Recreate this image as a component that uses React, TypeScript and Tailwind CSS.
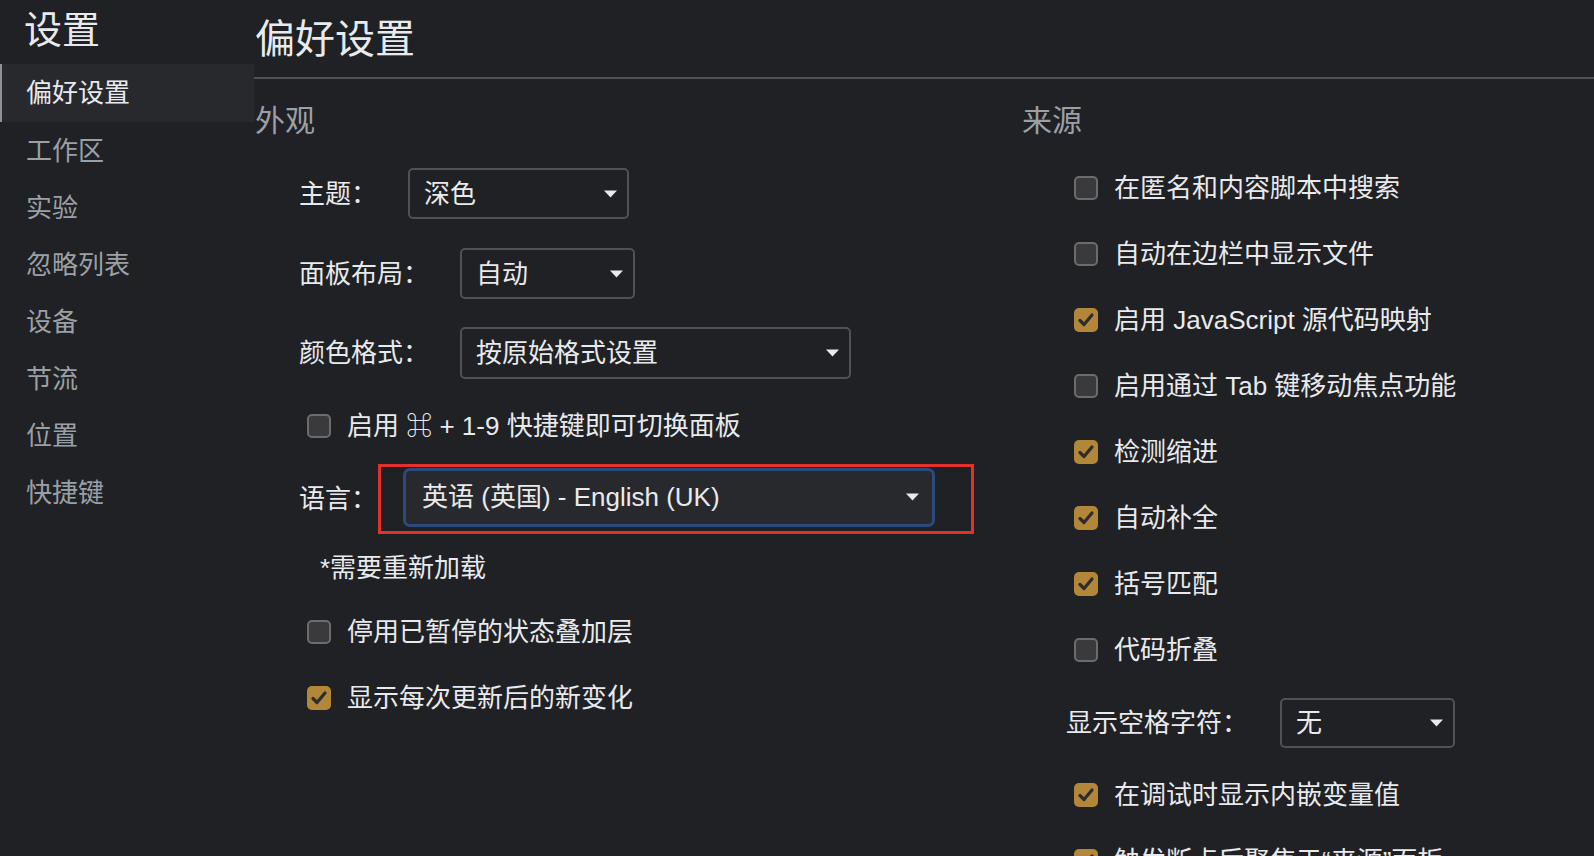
import React from "react";

const FONT = '"Liberation Sans", "Noto Sans CJK SC", "DejaVu Sans", sans-serif';

const sidebarItems = ["偏好设置", "工作区", "实验", "忽略列表", "设备", "节流", "位置", "快捷键"];

function Caret() {
  return (
    <svg width="13" height="8" viewBox="0 0 13 8" className="shrink-0">
      <polygon points="0,0.5 13,0.5 6.5,7.5" fill="#e8eaed" />
    </svg>
  );
}

function Checkbox({ checked }: { checked?: boolean }) {
  if (checked) {
    return (
      <span className="flex h-[24px] w-[24px] shrink-0 items-center justify-center rounded-[5px] bg-[#b3873a]">
        <svg width="18" height="16" viewBox="0 0 18 16">
          <polyline
            points="3,8.5 7,12.5 15,3"
            fill="none"
            stroke="#2d2d2f"
            strokeWidth="3.2"
            strokeLinecap="round"
            strokeLinejoin="round"
          />
        </svg>
      </span>
    );
  }
  return (
    <span className="block h-[24px] w-[24px] shrink-0 rounded-[5px] border-2 border-[#6b6c6e] bg-[#3a3a3c]" />
  );
}

function CheckRow({ label, checked, className = "" }: { label: string; checked?: boolean; className?: string }) {
  return (
    <div className={`flex h-[32px] items-center gap-[16px] pl-[53px] ${className}`}>
      <Checkbox checked={checked} />
      <span className="whitespace-nowrap text-[26px] leading-none text-[#e8eaed]">{label}</span>
    </div>
  );
}

function Select({ value, width }: { value: string; width: string }) {
  return (
    <div
      className={`flex h-full ${width} items-center justify-between rounded-[5px] border-2 border-[#4f5154] pl-[14px] pr-[10px]`}
    >
      <span className="whitespace-nowrap text-[26px] leading-none text-[#e8eaed]">{value}</span>
      <Caret />
    </div>
  );
}

function SelectRow({
  label,
  value,
  labelWidth,
  selectWidth,
  height,
  className = "",
}: {
  label: string;
  value: string;
  labelWidth: string;
  selectWidth: string;
  height: string;
  className?: string;
}) {
  return (
    <div className={`flex ${height} items-center pl-[45px] ${className}`}>
      <span className={`${labelWidth} shrink-0 whitespace-nowrap text-[26px] leading-none text-[#e8eaed]`}>
        {label}
      </span>
      <Select value={value} width={selectWidth} />
    </div>
  );
}

export default function App() {
  return (
    <div
      className="flex h-[856px] w-full overflow-hidden bg-[#202124] text-[#e8eaed]"
      style={{ fontFamily: FONT }}
    >
      {/* Sidebar */}
      <aside className="w-[254px] shrink-0">
        <div className="flex h-[64px] items-center pb-[4px] pl-[24px]">
          <h1 className="text-[38px] leading-none text-[#e8eaed]">设置</h1>
        </div>
        <nav>
          {sidebarItems.map((item, i) =>
            i === 0 ? (
              <div
                key={item}
                className="flex h-[58px] items-center border-l-2 border-[#8f9093] bg-[#28292c] pl-[24px] text-[26px] leading-none text-[#e8eaed]"
              >
                {item}
              </div>
            ) : (
              <div
                key={item}
                className="flex h-[57px] items-center pl-[26px] text-[26px] leading-none text-[#9aa0a6]"
              >
                {item}
              </div>
            ),
          )}
        </nav>
      </aside>

      {/* Main */}
      <main className="flex min-w-0 flex-1 flex-col">
        <header className="flex h-[79px] shrink-0 items-center border-b-2 border-[#505154] pl-[1px] pt-[1px]">
          <h2 className="text-[40px] leading-none text-[#e8eaed]">偏好设置</h2>
        </header>

        <div className="flex flex-1">
          {/* Appearance column */}
          <section className="w-[767px] shrink-0">
            <div className="mt-[22px] flex h-[40px] items-center pl-[1px]">
              <h3 className="text-[30px] leading-none text-[#9aa0a6]">外观</h3>
            </div>
            <SelectRow
              className="mt-[27px]"
              height="h-[51px]"
              label="主题："
              value="深色"
              labelWidth="w-[109px]"
              selectWidth="w-[221px]"
            />
            <SelectRow
              className="mt-[29px]"
              height="h-[51px]"
              label="面板布局："
              value="自动"
              labelWidth="w-[161px]"
              selectWidth="w-[175px]"
            />
            <SelectRow
              className="mt-[28px]"
              height="h-[52px]"
              label="颜色格式："
              value="按原始格式设置"
              labelWidth="w-[161px]"
              selectWidth="w-[391px]"
            />
            <CheckRow className="mt-[31px]" label="启用 ⌘ + 1-9 快捷键即可切换面板" />

            <div className="mt-[22px] flex h-[70px] items-center pl-[45px]">
              <span className="w-[79px] shrink-0 text-[26px] leading-none text-[#e8eaed]">语言：</span>
              <div className="flex h-[70px] w-[596px] items-center border-[3px] border-[#e3302b] pb-[4px] pl-[22px]">
                <div className="flex h-[59px] w-[532px] items-center justify-between rounded-[7px] border-[3px] border-[#2b4a7e] bg-[#28292d] pl-[16px] pr-[13px]">
                  <span className="whitespace-nowrap text-[26px] leading-none text-[#e8eaed]">
                    英语 (英国) - English (UK)
                  </span>
                  <Caret />
                </div>
              </div>
            </div>

            <div className="mt-[18px] flex h-[32px] items-center pl-[66px]">
              <span className="text-[26px] leading-none text-[#e8eaed]">*需要重新加载</span>
            </div>
            <CheckRow className="mt-[32px]" label="停用已暂停的状态叠加层" />
            <CheckRow className="mt-[34px]" label="显示每次更新后的新变化" checked />
          </section>

          {/* Sources column */}
          <section className="min-w-0 flex-1">
            <div className="mt-[22px] flex h-[40px] items-center pl-[1px]">
              <h3 className="text-[30px] leading-none text-[#9aa0a6]">来源</h3>
            </div>
            <CheckRow className="mt-[31px]" label="在匿名和内容脚本中搜索" />
            <CheckRow className="mt-[34px]" label="自动在边栏中显示文件" />
            <CheckRow className="mt-[34px]" label="启用 JavaScript 源代码映射" checked />
            <CheckRow className="mt-[34px]" label="启用通过 Tab 键移动焦点功能" />
            <CheckRow className="mt-[34px]" label="检测缩进" checked />
            <CheckRow className="mt-[34px]" label="自动补全" checked />
            <CheckRow className="mt-[34px]" label="括号匹配" checked />
            <CheckRow className="mt-[34px]" label="代码折叠" />
            <SelectRow
              className="mt-[32px]"
              height="h-[50px]"
              label="显示空格字符："
              value="无"
              labelWidth="w-[214px]"
              selectWidth="w-[175px]"
            />
            <CheckRow className="mt-[31px]" label="在调试时显示内嵌变量值" checked />
            <CheckRow className="mt-[34px]" label="触发断点后聚焦于“来源”面板" checked />
          </section>
        </div>
      </main>
    </div>
  );
}
